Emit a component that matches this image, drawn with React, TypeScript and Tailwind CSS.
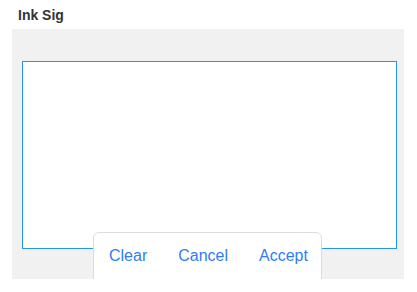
import React from 'react';

export default function App() {
  return (
    <div className="w-[417px] h-[292px] bg-white font-['Liberation_Sans',Arial,sans-serif]">
      <div className="pl-[18px] pt-[6px] h-[29px] text-[14px] leading-[18px] font-bold text-[#333]">
        Ink Sig
      </div>
      <div className="relative mx-[12px] w-[392px] h-[250px] bg-[#f1f1f1] overflow-hidden">
        <div className="pt-[32px] pl-[10px]">
          <div className="w-[375px] h-[188px] bg-white border border-[#2196f3]" />
        </div>
        {/* floating toolbar over the pad */}
        <div className="absolute left-[81px] top-[203px] w-[229px] h-[60px] bg-white border border-[#dcdcdc] rounded-t-[6px] flex items-start pt-[14px] pl-[15px] gap-[31px]">
          <button className="text-[16px] leading-[18px] text-[#2f7cf6]">Clear</button>
          <button className="text-[16px] leading-[18px] text-[#2f7cf6]">Cancel</button>
          <button className="text-[16px] leading-[18px] text-[#2f7cf6]">Accept</button>
        </div>
      </div>
    </div>
  );
}
